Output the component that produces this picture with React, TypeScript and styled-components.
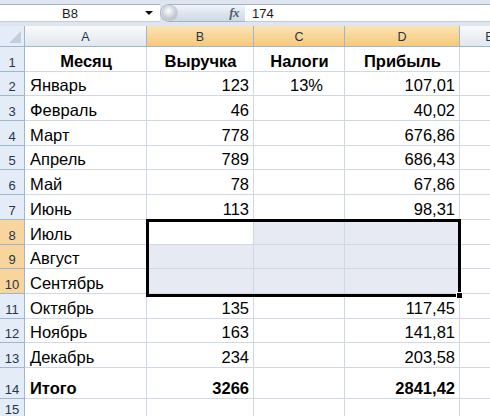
import React from "react";
import styled, { createGlobalStyle, css } from "styled-components";

const GlobalStyle = createGlobalStyle`
  html, body {
    margin: 0;
    padding: 0;
    background: #ffffff;
    overflow: hidden;
  }
  body {
    font-family: "Liberation Sans", Arial, sans-serif;
  }
`;

const GRID = "#d0d7e5";
const HEAD_LINE = "#9eb6ce";

const Window = styled.div`
  width: 490px;
  height: 416px;
  overflow: hidden;
  background: #ffffff;
  display: flex;
  flex-direction: column;
`;

const FormulaBar = styled.div`
  height: 29px;
  box-sizing: border-box;
  padding-top: 4px;
  padding-bottom: 4px;
  background: #dfe5ee;
  display: flex;
  align-items: stretch;
`;

const NameBox = styled.div`
  width: 160px;
  box-sizing: border-box;
  background: #ffffff;
  border-top: 1px solid #a7b3c4;
  border-bottom: 1px solid #c4ccd7;
  display: flex;
  align-items: center;
  font-size: 13px;
  color: #1a1a1a;
`;

const NameText = styled.span`
  width: 140px;
  text-align: center;
`;

const DropArrow = styled.span`
  width: 0;
  height: 0;
  border-left: 4px solid transparent;
  border-right: 4px solid transparent;
  border-top: 4px solid #111;
  margin-left: 5px;
`;

const FxCapsule = styled.div`
  width: 85px;
  box-sizing: border-box;
  border: 1px solid #a7b3c4;
  border-right: none;
  border-radius: 11px 0 0 11px;
  background: linear-gradient(#f2f5fa, #dbe3ee 55%, #cfd9e6);
  display: flex;
  align-items: center;
  justify-content: space-between;
  padding: 0 6px 0 2px;
`;

const Knob = styled.span`
  width: 14px;
  height: 14px;
  border-radius: 50%;
  background: radial-gradient(circle at 40% 35%, #ffffff, #c9ced6 55%, #a6adb8);
  box-shadow: 0 0 0 1px #c3cad4;
`;

const FxLabel = styled.span`
  font-family: "Liberation Serif", "Times New Roman", serif;
  font-style: italic;
  font-weight: bold;
  font-size: 13px;
  color: #555d68;
  letter-spacing: -0.5px;
`;

const FormulaInput = styled.div`
  flex: 1;
  background: #ffffff;
  border-top: 1px solid #a7b3c4;
  border-bottom: 1px solid #c4ccd7;
  display: flex;
  align-items: center;
  padding-left: 7px;
  font-size: 13px;
  color: #1a1a1a;
`;

const SheetArea = styled.div`
  position: relative;
  flex: 1;
`;

const ROWS = [25, 24, 25, 25, 24, 25, 25, 25, 24, 25, 25, 24, 25, 31, 20];

const Grid = styled.div`
  display: grid;
  grid-template-columns: 25px 122px 107px 91px 115px 60px;
  grid-template-rows: 21px ${ROWS.map((r) => `${r}px`).join(" ")};
`;

const ColHead = styled.div<{ $sel?: boolean }>`
  box-sizing: border-box;
  border-right: 1px solid ${HEAD_LINE};
  border-bottom: 1px solid ${HEAD_LINE};
  background: ${(p) =>
    p.$sel
      ? "linear-gradient(#fbe3b5, #f9d79a 45%, #f6c97b)"
      : "linear-gradient(#f9fafc, #eef1f5 45%, #e2e7ee)"};
  display: flex;
  align-items: center;
  justify-content: center;
  font-size: 12.5px;
  color: #27354a;
  padding-top: 1px;
`;

const Corner = styled.div`
  box-sizing: border-box;
  border-right: 1px solid ${HEAD_LINE};
  border-bottom: 1px solid ${HEAD_LINE};
  background: #e4ecf7;
  position: relative;
`;

const CornerTriangle = styled.span`
  position: absolute;
  right: 3px;
  bottom: 3px;
  width: 0;
  height: 0;
  border-left: 12px solid transparent;
  border-bottom: 12px solid #c4cedb;
`;

const RowHead = styled.div<{ $sel?: boolean }>`
  box-sizing: border-box;
  border-right: 1px solid ${HEAD_LINE};
  border-bottom: 1px solid ${HEAD_LINE};
  background: ${(p) => (p.$sel ? "#f8d59c" : "#e4ecf7")};
  display: flex;
  align-items: flex-end;
  justify-content: center;
  padding-bottom: 1px;
  font-size: 13px;
  color: #27354a;
`;

const Cell = styled.div<{
  $align?: "left" | "center" | "right";
  $bold?: boolean;
  $fill?: boolean;
  $indent?: number;
}>`
  box-sizing: border-box;
  border-right: 1px solid ${GRID};
  border-bottom: 1px solid ${GRID};
  background: ${(p) => (p.$fill ? "#e7e9f3" : "#ffffff")};
  display: flex;
  align-items: flex-end;
  padding: 0 4px 0 ${(p) => 5 + (p.$indent ?? 0)}px;
  white-space: nowrap;
  font-size: 16.5px;
  color: #000000;
  justify-content: ${(p) =>
    p.$align === "right" ? "flex-end" : p.$align === "center" ? "center" : "flex-start"};
  ${(p) =>
    p.$bold &&
    css`
      font-weight: bold;
    `}
`;

const Selection = styled.div`
  position: absolute;
  left: 146px;
  top: 193px;
  width: 315px;
  height: 78px;
  box-sizing: border-box;
  border: 3px solid #000000;
  pointer-events: none;
`;

const FillHandle = styled.div`
  position: absolute;
  left: 457px;
  top: 267px;
  width: 5px;
  height: 5px;
  background: #000000;
  box-shadow: 0 0 0 1px #ffffff;
`;

type Align = "left" | "center" | "right";
type Row = {
  cells: [string, string, string, string];
  bold?: boolean;
  align?: [Align, Align, Align, Align];
};

const numAlign: [Align, Align, Align, Align] = ["left", "right", "center", "right"];

const data: Row[] = [
  { cells: ["Месяц", "Выручка", "Налоги", "Прибыль"], bold: true, align: ["center", "center", "center", "center"] },
  { cells: ["Январь", "123", "13%", "107,01"] },
  { cells: ["Февраль", "46", "", "40,02"] },
  { cells: ["Март", "778", "", "676,86"] },
  { cells: ["Апрель", "789", "", "686,43"] },
  { cells: ["Май", "78", "", "67,86"] },
  { cells: ["Июнь", "113", "", "98,31"] },
  { cells: ["Июль", "", "", ""] },
  { cells: ["Август", "", "", ""] },
  { cells: ["Сентябрь", "", "", ""] },
  { cells: ["Октябрь", "135", "", "117,45"] },
  { cells: ["Ноябрь", "163", "", "141,81"] },
  { cells: ["Декабрь", "234", "", "203,58"] },
  { cells: ["Итого", "3266", "", "2841,42"], bold: true },
  { cells: ["", "", "", ""] },
];

const columns = ["A", "B", "C", "D", "E"];
const selectedCols = ["B", "C", "D"];

function isSelected(row: number, col: number) {
  return row >= 8 && row <= 10 && col >= 1 && col <= 3;
}

export default function App() {
  return (
    <Window>
      <GlobalStyle />
      <FormulaBar>
        <NameBox>
          <NameText>B8</NameText>
          <DropArrow />
        </NameBox>
        <FxCapsule>
          <Knob />
          <FxLabel>fx</FxLabel>
        </FxCapsule>
        <FormulaInput>174</FormulaInput>
      </FormulaBar>
      <SheetArea>
        <Grid>
          <Corner>
            <CornerTriangle />
          </Corner>
          {columns.map((c) => (
            <ColHead key={c} $sel={selectedCols.includes(c)}>
              {c}
            </ColHead>
          ))}
          {data.map((row, i) => {
            const n = i + 1;
            const align = row.align ?? numAlign;
            return (
              <React.Fragment key={n}>
                <RowHead $sel={n >= 8 && n <= 10}>{n}</RowHead>
                {row.cells.map((v, j) => (
                  <Cell
                    key={j}
                    $align={align[j]}
                    $bold={row.bold}
                    $indent={n > 1 && j === 2 ? 14 : 0}
                    $fill={isSelected(n, j) && !(n === 8 && j === 1)}
                  >
                    {v}
                  </Cell>
                ))}
                <Cell />
              </React.Fragment>
            );
          })}
        </Grid>
        <Selection />
        <FillHandle />
      </SheetArea>
    </Window>
  );
}
